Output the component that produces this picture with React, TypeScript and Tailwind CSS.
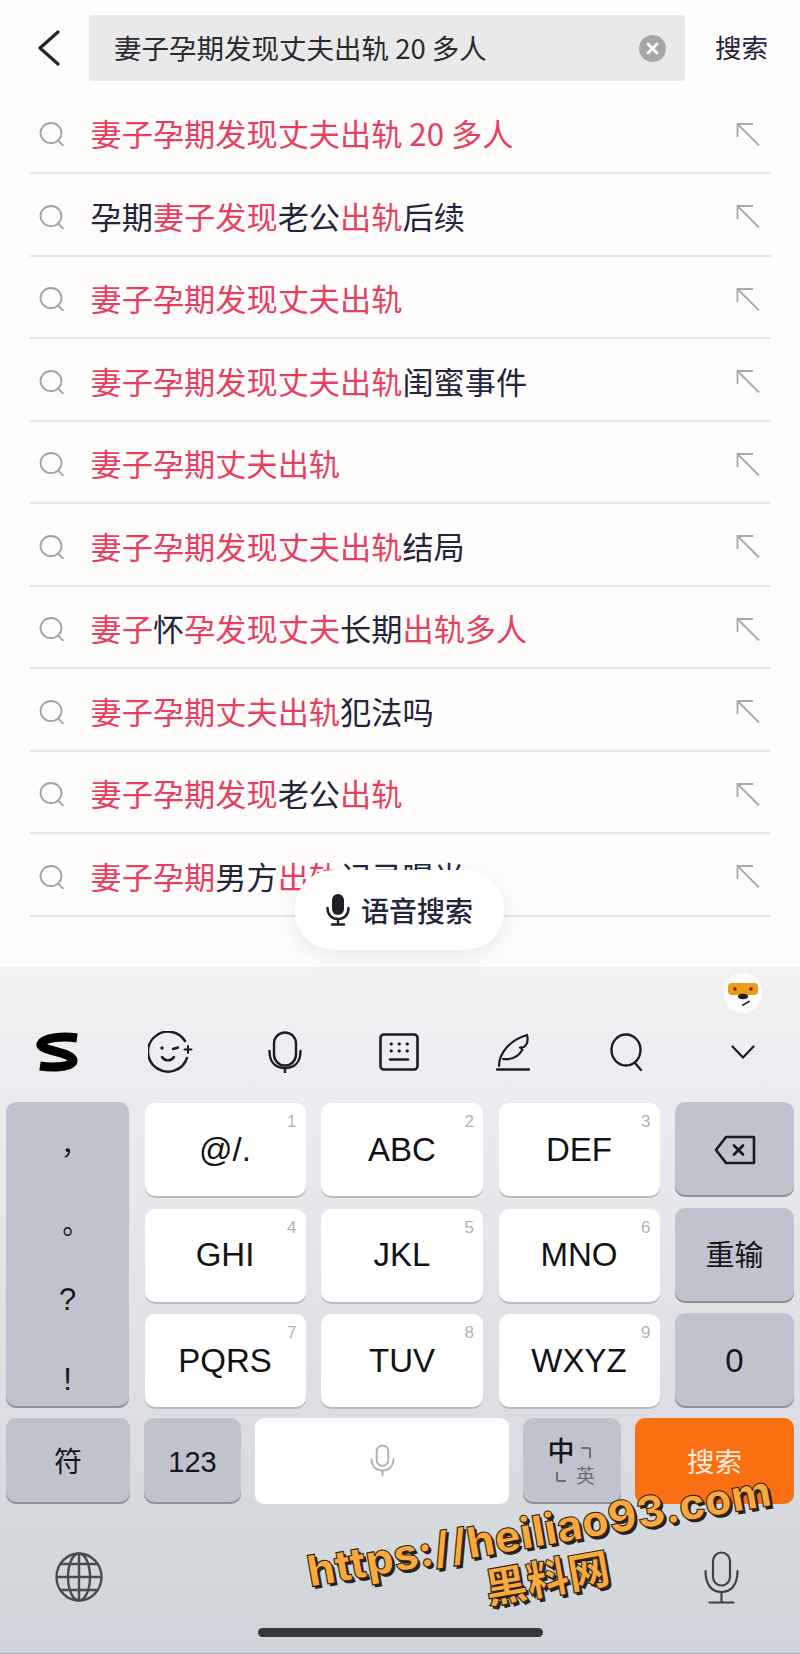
import type { ReactNode } from 'react'

const sans = "font-['Liberation_Sans','Noto_Sans_CJK_SC',sans-serif]"
const cjk = "font-['Noto_Sans_CJK_SC',sans-serif]"

// [text, highlighted]
type Part = [string, boolean]

const suggestions: Part[][] = [
  [['妻子孕期发现丈夫出轨 20 多人', true]],
  [['孕期', false], ['妻子发现', true], ['老公', false], ['出轨', true], ['后续', false]],
  [['妻子孕期发现丈夫出轨', true]],
  [['妻子孕期发现丈夫出轨', true], ['闺蜜事件', false]],
  [['妻子孕期丈夫出轨', true]],
  [['妻子孕期发现丈夫出轨', true], ['结局', false]],
  [['妻子', true], ['怀', false], ['孕', true], ['发现', true], ['丈夫', true], ['长期', false], ['出轨多人', true]],
  [['妻子孕期丈夫出轨', true], ['犯法吗', false]],
  [['妻子孕期发现', true], ['老公', false], ['出轨', true]],
  [['妻子孕期', true], ['男方', false], ['出轨', true], ['记录曝光', false]],
]

const numberKeys = [
  ['@/.', '1'], ['ABC', '2'], ['DEF', '3'],
  ['GHI', '4'], ['JKL', '5'], ['MNO', '6'],
  ['PQRS', '7'], ['TUV', '8'], ['WXYZ', '9'],
]

function SearchGlyph() {
  return (
    <svg width="26" height="24" viewBox="0 0 26 24" fill="none" stroke="#a3a3a3" strokeWidth="1.8" strokeLinecap="round">
      <ellipse cx="12" cy="11" rx="10.5" ry="10" />
      <path d="M19 18.5l5 5" />
    </svg>
  )
}

function FillArrow() {
  return (
    <svg width="24" height="23" viewBox="0 0 24 23" fill="none" stroke="#a8a8a8" strokeWidth="1.8">
      <path d="M17 1H1.5v13" />
      <path d="M2 1.5l21 21" />
    </svg>
  )
}

function ToolbarIcons() {
  return (
    <div className="grid grid-cols-[repeat(7,114px)] h-[42px] items-center justify-items-center text-[#1b1d22]">
      {/* input method logo */}
      <svg width="46" height="40" viewBox="0 0 46 40" fill="none" stroke="#000" strokeWidth="9">
        <path d="M43 6C30 4 10 5 7 12c-2 7 33 8 32 17-1 6-20 7-33 5" />
      </svg>
      <svg width="46" height="42" viewBox="0 0 46 42" fill="none" stroke="currentColor" strokeWidth="2.400" strokeLinecap="round">
        <path d="M37 10A20 20 0 1 0 39 27" />
        <circle cx="14" cy="17" r="1.700" fill="currentColor" stroke="none" />
        <path d="M25 18l5-1.500" />
        <path d="M14 26c3 4.500 9 4.500 12 0" />
        <path d="M40 15v7M36.500 18.500h7" strokeWidth="2" />
      </svg>
      <svg width="34" height="42" viewBox="0 0 34 42" fill="none" stroke="currentColor" strokeWidth="2.400" strokeLinecap="round">
        <rect x="6" y="1.500" width="22" height="33" rx="11" />
        <path d="M1.500 20c0 11 6 17 15.500 17s15.500-6 15.500-17" />
        <path d="M17 37v4.500" />
      </svg>
      <svg width="40" height="38" viewBox="0 0 40 38" fill="none" stroke="currentColor" strokeWidth="2.600" strokeLinecap="round">
        <rect x="1.500" y="1.500" width="37" height="35" rx="3.500" />
        <path d="M12 11h.5M20 11h.5M28 11h.5M12 18h.5M20 18h.5M28 18h.5" strokeWidth="2.800" />
        <path d="M11 26.500h18" />
      </svg>
      <svg width="34" height="38" viewBox="0 0 34 38" fill="none" stroke="currentColor" strokeWidth="2.200" strokeLinecap="round" strokeLinejoin="round">
        <path d="M3 33C3 20 14 7 31 2c1.500 6-.5 10-3 12l-4 .5 2.500 2C23 23 16 27 7 26" />
        <path d="M1 36.500h32" strokeWidth="2.400" />
      </svg>
      <svg width="34" height="38" viewBox="0 0 34 38" fill="none" stroke="currentColor" strokeWidth="2.400" strokeLinecap="round">
        <ellipse cx="16" cy="17" rx="14.500" ry="15.500" />
        <path d="M25 30l6 7" />
      </svg>
      <svg className="ml-[4px]" width="24" height="14" viewBox="0 0 24 14" fill="none" stroke="currentColor" strokeWidth="2.200" strokeLinecap="round">
        <path d="M1.500 1.500L12 12.500 22.500 1.500" />
      </svg>
    </div>
  )
}

function Mascot() {
  return (
    <svg width="40" height="42" viewBox="0 0 40 42">
      <ellipse cx="20" cy="21" rx="19" ry="20.500" fill="#fdfdfd" />
      <rect x="5" y="11" width="30" height="12" rx="4" fill="#ee9a1d" />
      <circle cx="12" cy="17" r="1.800" fill="#5a3208" />
      <circle cx="28" cy="17" r="1.800" fill="#5a3208" />
      <ellipse cx="20" cy="24.500" rx="5" ry="2.800" fill="#1d1d1d" />
      <path d="M20 33l6-3.500" stroke="#333" strokeWidth="2" strokeLinecap="round" />
    </svg>
  )
}

function SideKey({ children, className = '' }: { children: ReactNode; className?: string }) {
  return (
    <div className={`flex items-center justify-center rounded-[10px] bg-[#c0c3ce] shadow-[inset_0_-2px_0_#8e919d] text-[#15171c] ${className}`}>
      {children}
    </div>
  )
}

function NumKey({ label, num }: { label: string; num: string }) {
  return (
    <div className="relative my-[1px] flex items-center justify-center rounded-[10px] bg-white text-[33px] text-[#101216] shadow-[0_2px_0_#b8bac4]">
      {label}
      <span className="absolute right-[9px] top-[9px] text-[17px] leading-[20px] text-[#b3b3b3]">{num}</span>
    </div>
  )
}

export default function App() {
  return (
    <div className={`relative flex h-[1654px] w-[800px] flex-col overflow-hidden bg-[#fefdfc] ${sans}`}>
      {/* Search header */}
      <div className="flex h-[91.5px] shrink-0 items-start pt-[15px]">
        <div className="flex h-[66px] w-[89px] items-center pl-[37px]">
          <svg width="24" height="36" viewBox="0 0 24 36" fill="none" stroke="#23252e" strokeWidth="3.200" strokeLinecap="round" strokeLinejoin="round">
            <path d="M21 2L3 18l18 16" />
          </svg>
        </div>
        <div className="flex h-[66px] w-[596px] items-center justify-between rounded-[2px] bg-[#e9e9e9] pl-[25px] pr-[19px]">
          <span className={`text-[27.5px] text-[#2a2b30] ${cjk}`}>妻子孕期发现丈夫出轨 20 多人</span>
          <svg width="27" height="27" viewBox="0 0 27 27">
            <circle cx="13.500" cy="13.500" r="13.500" fill="#a6a6a6" />
            <path d="M9 9l9 9M18 9l-9 9" stroke="#fff" strokeWidth="2.800" strokeLinecap="round" />
          </svg>
        </div>
        <span className="flex h-[66px] flex-1 items-center pl-[30px] pt-[3px] text-[26.5px] text-[#23253a]">搜索</span>
      </div>

      {/* Suggestion rows */}
      <ul className="mx-[29.5px] flex shrink-0 flex-col">
        {suggestions.map((parts, i) => (
          <li key={i} className="flex h-[82.5px] items-center border-b-2 border-[#e6e6e6] pt-[5px]">
            <span className="ml-[9px] w-[52px] shrink-0">
              <SearchGlyph />
            </span>
            <span className={`mb-[2px] flex-1 text-[31.2px] leading-[40px] text-[#23253a] ${cjk}`}>
              {parts.map(([text, hot], j) => (
                <span key={j} className={hot ? 'text-[#e83f60]' : ''}>{text}</span>
              ))}
            </span>
            <span className="mr-[11px]">
              <FillArrow />
            </span>
          </li>
        ))}
      </ul>

      {/* Voice search pill */}
      <div className="absolute left-[295px] top-[870px] z-10 flex h-[80px] w-[209px] items-center justify-center gap-[11px] rounded-[38px] bg-white shadow-[0_6px_22px_rgba(0,0,0,0.08)]">
        <svg width="24" height="32" viewBox="0 0 24 32" fill="none" stroke="#1e2026" strokeWidth="2.400" strokeLinecap="round">
          <rect x="6" y="0" width="12" height="21" rx="6" fill="#1e2026" stroke="none" />
          <path d="M1.500 14c0 7 4.500 11 10.500 11s10.500-4 10.500-11M12 25v5.500M6 30.500h12" />
        </svg>
        <span className={`text-[28px] font-medium leading-[40px] text-[#23253a] ${cjk}`}>语音搜索</span>
      </div>

      {/* Keyboard */}
      <div className="mt-auto flex h-[687px] shrink-0 flex-col border-b border-[#a3a6ae] bg-gradient-to-b from-[#f1f2f4] to-[#d0d3d9] pt-[5px]">
        <div className="flex h-[40px] justify-end pr-[37px]">
          <Mascot />
        </div>
        <div className="mt-[19px]">
          <ToolbarIcons />
        </div>

        <div className="mt-[29px] grid grid-cols-[123px_161px_162px_161px_119px] grid-rows-[95px_95px_95px] gap-x-[15.5px] gap-y-[10.5px] px-[6px]">
          <SideKey className="row-span-3">
            <div className="flex h-full flex-col items-center pt-[25px]">
              <span className="font-['Noto_Sans_CJK_TC'] text-[27px] leading-[50px]">，</span>
              <span className="mt-[29px] font-['Noto_Sans_CJK_TC'] text-[27px] leading-[50px]">。</span>
              <span className="mt-[19px] text-[31px] leading-[50px]">?</span>
              <span className="mt-[30px] text-[31px] leading-[50px]">!</span>
            </div>
          </SideKey>

          {numberKeys.slice(0, 3).map(([label, num]) => (
            <NumKey key={num} label={label} num={num} />
          ))}
          <SideKey>
            <svg width="42" height="30" viewBox="0 0 42 30" fill="none" stroke="#17191e" strokeWidth="2.600" strokeLinejoin="round" strokeLinecap="round">
              <path d="M12 2h28v26H12L2 15z" />
              <path d="M20 10.500l9 9M29 10.500l-9 9" />
            </svg>
          </SideKey>

          {numberKeys.slice(3, 6).map(([label, num]) => (
            <NumKey key={num} label={label} num={num} />
          ))}
          <SideKey className="pt-[3px] text-[29px]">重输</SideKey>

          {numberKeys.slice(6, 9).map(([label, num]) => (
            <NumKey key={num} label={label} num={num} />
          ))}
          <SideKey className="text-[33px]">0</SideKey>
        </div>

        {/* Bottom key row */}
        <div className="mt-[10px] flex h-[86px] gap-[14px] px-[6px]">
          <SideKey className="w-[124px] pt-[3px] text-[28px]">符</SideKey>
          <SideKey className="w-[97px] pt-[3px] text-[29px]">123</SideKey>
          <div className="flex w-[254px] items-center justify-center rounded-[9px] bg-white pb-[3px]">
            <svg width="25" height="32" viewBox="0 0 34 44" fill="none" stroke="#aeb0b6" strokeWidth="2.600" strokeLinecap="round">
              <rect x="9" y="2" width="16" height="28" rx="8" />
              <path d="M2 21c0 10 6.500 15.500 15 15.500S32 31 32 21" />
              <path d="M17 36.500V43" />
            </svg>
          </div>
          <SideKey className="w-[98px] pt-[3px]">
            <div className="grid grid-cols-[27px_22px] grid-rows-[28px_20px] items-center justify-items-center">
              <span className="text-[27px] font-medium leading-none">中</span>
              <span className="h-[11px] w-[10px] rounded-tr-[3px] border-r-2 border-t-2 border-[#6d6f78]" />
              <span className="h-[10px] w-[10px] rounded-bl-[3px] border-b-2 border-l-2 border-[#6d6f78]" />
              <span className="text-[19px] leading-none text-[#6d6f78]">英</span>
            </div>
          </SideKey>
          <div className="flex flex-1 items-center justify-center rounded-[10px] bg-[#fb6f13] pt-[3px] text-[27.5px] text-[#ffeadb]">
            搜索
          </div>
        </div>

        <div className="mt-[46px] flex h-[54px] items-center justify-between pl-[55px] pr-[61px]">
          <svg width="48" height="50" viewBox="0 0 48 50" fill="none" stroke="#4a4c52" strokeWidth="2.400">
            <ellipse cx="24" cy="25" rx="22.500" ry="23.500" />
            <ellipse cx="24" cy="25" rx="11" ry="23.500" />
            <path d="M24 1.500v47M1.500 25h45M5 12h38M5 38h38" />
          </svg>
          <svg width="35" height="53" viewBox="0 0 35 53" fill="none" stroke="#3f4147" strokeWidth="2.200" strokeLinecap="round">
            <rect x="9" y="1.500" width="17" height="33" rx="8.500" />
            <path d="M1.500 20c0 14 6.500 21 16 21s16-7 16-21" />
            <path d="M17.500 41v10M5.500 51.500h24" />
          </svg>
        </div>

        <div className="mx-auto mt-[24px] h-[9px] w-[285px] rounded-full bg-[#36383d]" />
      </div>

      {/* Site watermark */}
      <div className="absolute left-[293px] top-[1509px] z-20 flex w-[500px] -rotate-[10deg] flex-col items-center leading-none text-[#fba93d] [-webkit-text-stroke:1px_#2a2217] [text-shadow:2px_3px_0_#2a2217]">
        <span className="whitespace-nowrap font-['Inter'] text-[43.5px] font-extrabold">https://heiliao93.com</span>
        <span className={`mt-[2px] text-[42px] font-black ${cjk}`}>黑料网</span>
      </div>
    </div>
  )
}
